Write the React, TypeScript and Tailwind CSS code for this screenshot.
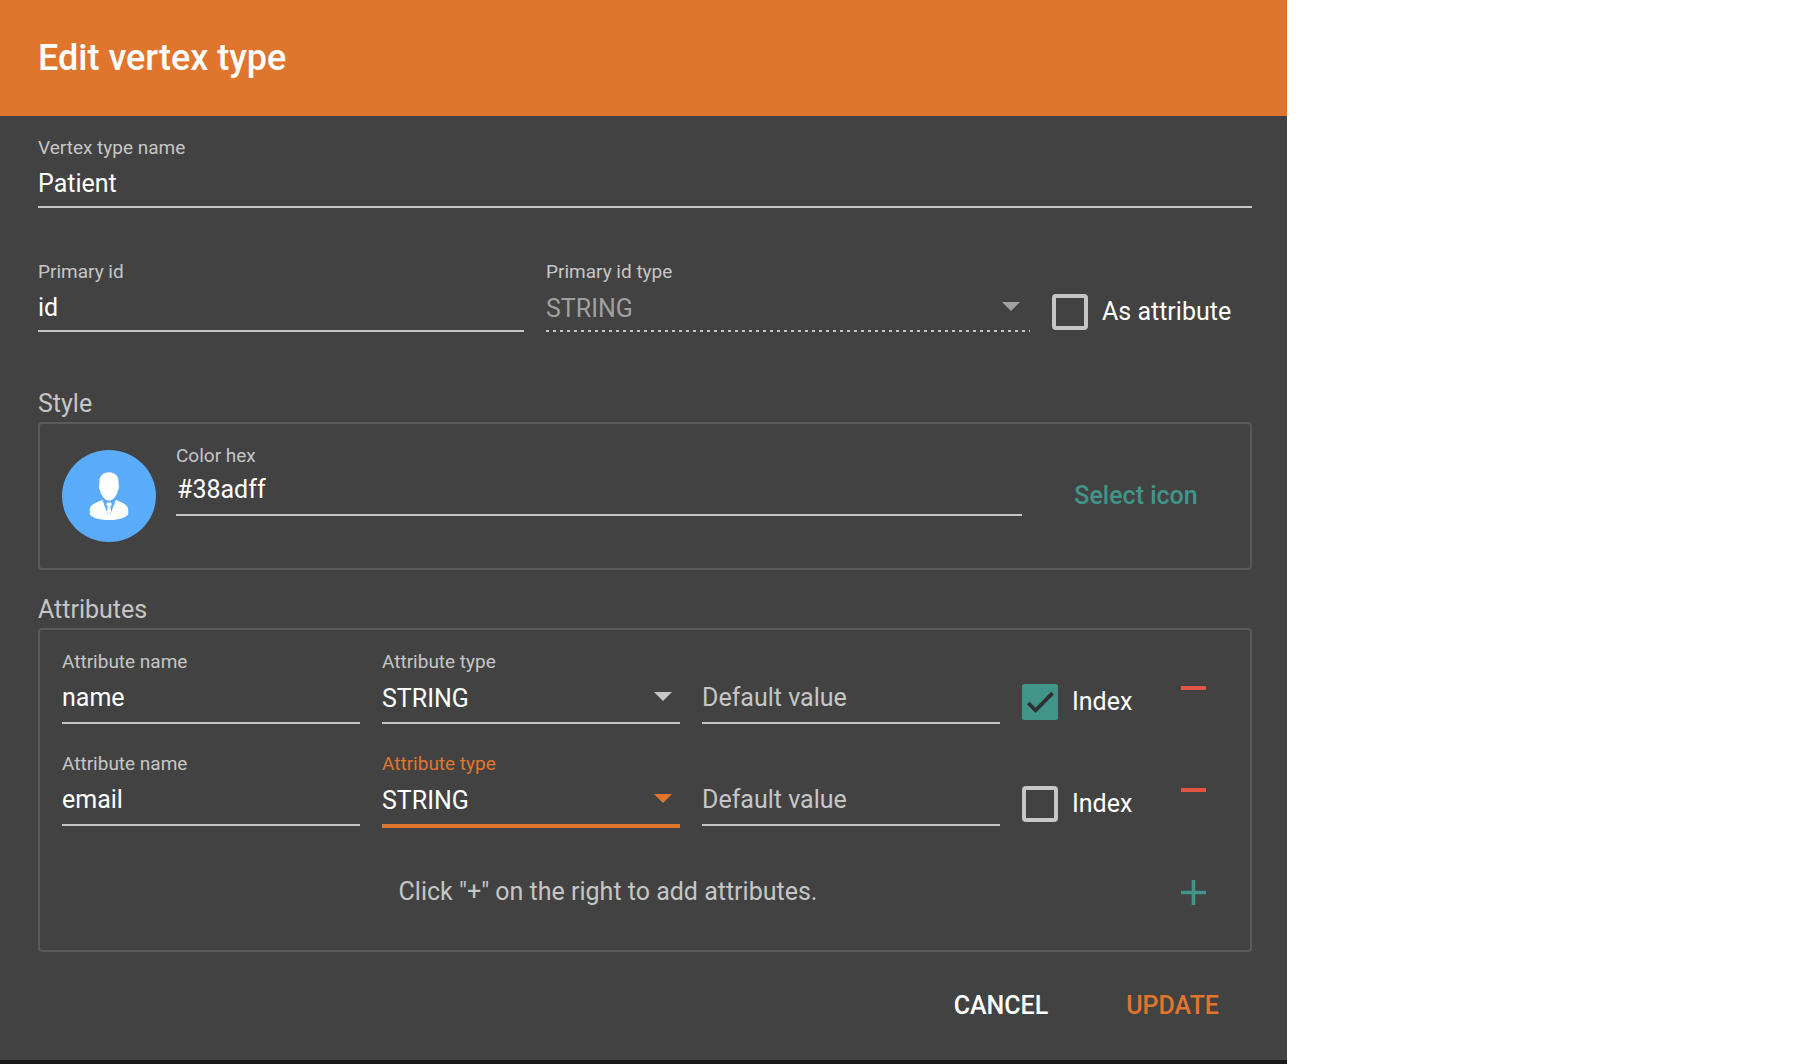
import React, { useId, useState } from "react";

type FieldProps = {
  label: string;
  value?: string;
  kind?: "plain" | "compact" | "row";
};

const labelClass = "block text-[19px] leading-6 text-[#c6c6c6]";

const inputClass = {
  plain:
    "block h-12 w-full border-b-2 border-[#c6c6c6] bg-transparent py-[7px] leading-8 text-white outline-none",
  compact:
    "block h-12 w-full border-b-2 border-[#c6c6c6] bg-transparent px-px pb-[9px] pt-[5px] leading-8 text-white outline-none",
  row: "block h-[50px] w-full border-b-2 border-[#c6c6c6] bg-transparent pb-[9px] pt-[7px] leading-8 text-white outline-none placeholder:text-[#c6c6c6] placeholder:opacity-100",
};

function TextField({ label, value = "", kind = "plain" }: FieldProps) {
  const id = useId();
  const [text, setText] = useState(value);
  return (
    <div className="min-w-0">
      <label htmlFor={id} className={labelClass}>
        {label}
      </label>
      <input id={id} value={text} onChange={(e) => setText(e.target.value)} className={inputClass[kind]} />
    </div>
  );
}

function DefaultValueField() {
  return (
    <div className="min-w-0 pt-6">
      <input aria-label="Default value" placeholder="Default value" className={inputClass.row} />
    </div>
  );
}

const selectStyles = {
  normal: {
    label: labelClass,
    select: "block h-12 w-full appearance-none bg-transparent pb-2.5 pt-1.5 text-white outline-none",
    arrow: "pointer-events-none absolute right-2 top-[18px] h-[9px] w-[18px] fill-[#c6c6c6]",
    line: "h-0.5 bg-[#c6c6c6]",
  },
  active: {
    label: "block text-[19px] leading-6 text-[#e0752d]",
    select: "block h-12 w-full appearance-none bg-transparent pb-2.5 pt-1.5 text-white outline-none",
    arrow: "pointer-events-none absolute right-2 top-[18px] h-[9px] w-[18px] fill-[#e0752d]",
    line: "-mb-0.5 h-1 bg-[#e0752d]",
  },
  disabled: {
    label: labelClass,
    select:
      "block h-[46px] w-full appearance-none bg-transparent pb-2.5 pt-1.5 text-[#a0a0a0] opacity-100 outline-none",
    arrow: "pointer-events-none absolute right-2.5 top-[18px] h-[9px] w-[18px] fill-[#a0a0a0]",
    line: "h-0.5 bg-[repeating-linear-gradient(to_right,#c6c6c6_0px_3px,transparent_3px_7px)]",
  },
};

function SelectField({ label, state = "normal" }: { label: string; state?: "normal" | "active" | "disabled" }) {
  const id = useId();
  const styles = selectStyles[state];
  return (
    <div className="min-w-0">
      <label htmlFor={id} className={styles.label}>
        {label}
      </label>
      <div className="relative">
        <select id={id} disabled={state === "disabled"} defaultValue="STRING" className={styles.select}>
          <option>STRING</option>
          <option>INT</option>
          <option>FLOAT</option>
        </select>
        <svg viewBox="0 0 18 9" className={styles.arrow}>
          <path d="M0 0h18L9 9z" />
        </svg>
      </div>
      <div className={styles.line} />
    </div>
  );
}

function Checkbox({ label, checked = false }: { label: string; checked?: boolean }) {
  const [on, setOn] = useState(checked);
  return (
    <label className="flex items-center gap-3.5 whitespace-nowrap leading-9 text-white">
      <span className="relative block size-9 shrink-0">
        <input
          type="checkbox"
          checked={on}
          onChange={(e) => setOn(e.target.checked)}
          className="block size-9 appearance-none rounded border-4 border-[#c6c6c6] checked:rounded-xs checked:border-[#419488] checked:bg-[#419488]"
        />
        {on && (
          <svg viewBox="0 0 36 36" className="pointer-events-none absolute inset-0 size-9">
            <path d="M6.2 19l7.400 7.400L30.500 9.200" fill="none" stroke="#303030" strokeWidth="3.800" />
          </svg>
        )}
      </span>
      {label}
    </label>
  );
}

function AttributeRow({ name, indexed = false, active = false }: { name: string; indexed?: boolean; active?: boolean }) {
  return (
    <div className="grid grid-cols-[1fr_1fr_1fr_124px_60px] gap-x-[22px]">
      <TextField label="Attribute name" value={name} kind="row" />
      <SelectField label="Attribute type" state={active ? "active" : "normal"} />
      <DefaultValueField />
      <div className="pt-[34px]">
        <Checkbox label="Index" checked={indexed} />
      </div>
      <div className="pt-6">
        <button type="button" aria-label={`Remove ${name}`} className="flex h-7 w-[50px] items-center justify-center">
          <span className="block h-1 w-[25px] bg-[#e05543]" />
        </button>
      </div>
    </div>
  );
}

function PersonIcon() {
  return (
    <svg viewBox="0 0 94 92" className="h-[92px] w-[94px] shrink-0">
      <ellipse cx="47" cy="46" rx="47" ry="46" fill="#5aabfa" />
      <g fill="#fff">
        <path d="M47 22.3c5.800 0 9.600 3.700 9.600 9.300v3.400c.8.600.6 3.200-.4 4.900C55 45.500 51 50.500 47 50.500s-8-5-9.200-10.600c-1-1.700-1.200-4.300-.4-4.900v-3.400c0-5.600 3.800-9.300 9.600-9.300z" />
        <path d="M40.300 49.700C35.500 52.600 27.800 53.400 27.800 60v4.500C31 68.300 39 70 47 70s16-1.700 19.200-5.500V60c0-6.600-7.500-7.400-12.200-10.300L49.500 52.800h-5z" />
      </g>
      <path d="M40.300 49.700L45.600 64l1.400-1 1.400 1L54 49.700l-3.400 1.600h-7.200z" fill="#5aabfa" />
      <path d="M45.300 52.400h3.600l1 1.900-1.600 2.500.8 5.200L47 64.500 45 62l.8-5.200-1.500-2.500z" fill="#fff" />
    </svg>
  );
}

export default function App() {
  return (
    <main className="min-h-screen bg-white font-['Roboto',sans-serif] text-[25px]">
      <section className="w-full max-w-[1287px] border-b-4 border-[#191919] bg-[#424242]">
        <header className="bg-[#e0752d] px-[38px] py-[34px]">
          <h1 className="text-[36px] font-medium leading-12 text-white">Edit vertex type</h1>
        </header>

        <form className="pb-7 pl-[38px] pr-[35px] pt-5" onSubmit={(e) => e.preventDefault()}>
          <TextField label="Vertex type name" value="Patient" />

          <div className="mt-[52px] grid grid-cols-[486fr_484fr_200px] gap-x-[22px]">
            <TextField label="Primary id" value="id" />
            <SelectField label="Primary id type" state="disabled" />
            <div className="pt-[34px]">
              <Checkbox label="As attribute" />
            </div>
          </div>

          <h2 className="mt-[54px] leading-9 text-[#c6c6c6]">Style</h2>
          <div className="flex items-start rounded border-2 border-[#5a5a5a] px-[22px] pb-[26px] pt-5">
            <div className="pt-1.5">
              <PersonIcon />
            </div>
            <div className="ml-5 flex-1">
              <TextField label="Color hex" value="#38adff" kind="compact" />
            </div>
            <button type="button" className="ml-10 mr-[18px] mt-7 h-12 w-[148px] font-medium text-[#419488]">
              Select icon
            </button>
          </div>

          <h2 className="mt-[22px] leading-9 text-[#c6c6c6]">Attributes</h2>
          <div className="rounded border-2 border-[#5a5a5a] px-[22px] pb-[34px] pt-5">
            <div className="flex flex-col gap-7">
              <AttributeRow name="name" indexed />
              <AttributeRow name="email" active />
            </div>
            <div className="mt-[42px] flex h-12 items-center">
              <p className="flex-1 text-center text-[#c6c6c6]">Click "+" on the right to add attributes.</p>
              <button
                type="button"
                aria-label="Add attribute"
                className="ml-3.5 mr-2.5 flex h-12 w-[50px] items-center justify-center"
              >
                <svg viewBox="0 0 25 25" className="size-[25px]">
                  <path d="M12.500 0v25M0 12.500h25" stroke="#419488" strokeWidth="3.600" />
                </svg>
              </button>
            </div>
          </div>

          <div className="mt-7 flex justify-end gap-[46px] pr-[17px] font-medium">
            <button type="button" className="h-[52px] px-4 text-white">
              CANCEL
            </button>
            <button type="submit" className="h-[52px] px-4 text-[#e0752d]">
              UPDATE
            </button>
          </div>
        </form>
      </section>
    </main>
  );
}
